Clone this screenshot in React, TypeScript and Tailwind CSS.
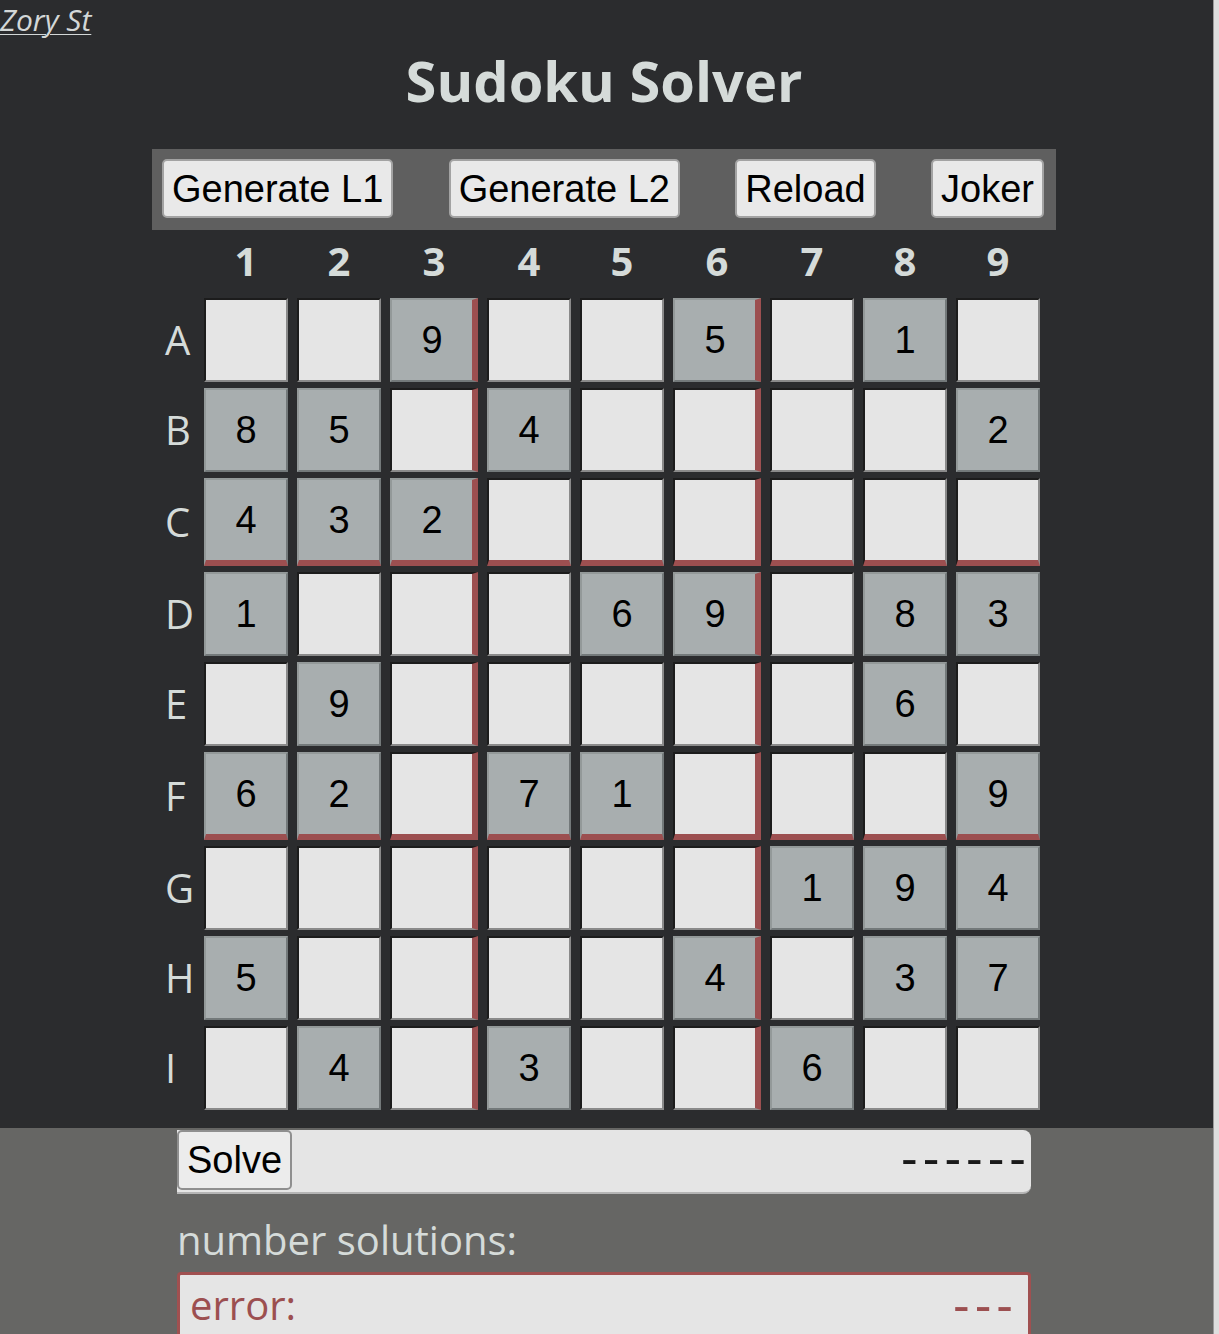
import React from "react";

const rows = ["A", "B", "C", "D", "E", "F", "G", "H", "I"];
const puzzle = [
  "009005010",
  "850400002",
  "432000000",
  "100069083",
  "090000060",
  "620710009",
  "000000194",
  "500004037",
  "040300600",
];

const Cell = ({ value, r, c }: { value: string; r: number; c: number }) => {
  const given = value !== "0";
  const redRight = c === 2 || c === 5;
  const redBottom = r === 2 || r === 5;
  // top/left edges follow the cell state, right/bottom turn red on box lines
  const face = given
    ? "bg-[#a8aeaf] border-t-[#939999] border-l-[#939999]"
    : "bg-[#e5e5e5] border-t-[#1c1c1c] border-l-[#1c1c1c]";
  const right = redRight
    ? "w-[88px] border-r-[6px] border-r-[#9c4f50]"
    : given
      ? "w-[84px] border-r-2 border-r-[#73797a]"
      : "w-[84px] border-r-2 border-r-[#8a8a8a]";
  const bottom = redBottom
    ? "h-[88px] border-b-[6px] border-b-[#9c4f50]"
    : given
      ? "h-[84px] border-b-2 border-b-[#73797a]"
      : "h-[84px] border-b-2 border-b-[#8a8a8a]";
  return (
    <div
      className={`flex items-center justify-center border-t-2 border-l-2 text-[38px] text-black ${face} ${right} ${bottom}`}
      style={{ fontFamily: "'Liberation Sans', Arial, sans-serif" }}
    >
      {given ? value : ""}
    </div>
  );
};

export default function App() {
  return (
    <div className="flex h-[1334px] overflow-hidden bg-[#2b2c2e]">
      <div className="flex flex-1 flex-col">
        <div className="h-[40px]">
          <a
            href="#"
            className="text-[30px] italic leading-[40px] text-[#d3d7d7] underline decoration-1 underline-offset-[3px]"
            style={{ fontFamily: "'Open Sans', sans-serif" }}
          >
            Zory St
          </a>
        </div>

        <div className="pr-[5px]">
          <h1
            className="text-center text-[56px] font-bold leading-[80px] text-[#d5dbd9]"
            style={{ fontFamily: "'Open Sans', sans-serif" }}
          >
            Sudoku Solver
          </h1>

          <div className="mx-auto mt-[29px] w-[904px]">
            <div
              className="flex items-center justify-between bg-[#5f5f5f] pl-[10px] pr-[12px] pt-[10px] pb-[12px]"
              style={{ fontFamily: "'Liberation Sans', Arial, sans-serif" }}
            >
              {["Generate L1", "Generate L2", "Reload", "Joker"].map((label) => (
                <button
                  key={label}
                  className="h-[59px] rounded-[5px] border-2 border-[#a3a3a3] bg-[#e9e9e9] px-[8px] text-[38px] leading-none text-black"
                >
                  {label}
                </button>
              ))}
            </div>

            <div
              className="ml-[13px] grid grid-cols-[30px_84px_84px_88px_84px_84px_88px_84px_84px_84px] items-center gap-x-[9px] gap-y-[6px]"
              style={{ fontFamily: "'Open Sans', sans-serif" }}
            >
              <div className="h-[62px]" />
              {Array.from({ length: 9 }, (_, i) => (
                <div
                  key={i}
                  className="flex h-[62px] items-center justify-center text-[40px] font-bold text-[#d5dbd9]"
                >
                  {i + 1}
                </div>
              ))}
              {rows.map((label, r) => (
                <React.Fragment key={label}>
                  <div className="text-[40px] leading-none text-[#d5dbd9]">{label}</div>
                  {puzzle[r].split("").map((v, c) => (
                    <Cell key={c} value={v} r={r} c={c} />
                  ))}
                </React.Fragment>
              ))}
            </div>
          </div>
        </div>

        <div className="mt-[18px] flex-1 bg-[#666664] pr-[5px]">
          <div className="mx-auto w-[854px]">
            <div
              className="mt-[2px] flex h-[64px] items-center justify-between rounded-r-[8px] border-b-2 border-[#b5b5b5] bg-[#e5e5e5]"
              style={{ fontFamily: "'Liberation Sans', Arial, sans-serif" }}
            >
              <button className="h-[60px] self-start rounded-[5px] border-2 border-[#8f8f8f] bg-[#ececec] px-[8px] text-[38px] leading-none text-black">
                Solve
              </button>
              <span className="mb-[6px] text-[50px] leading-none tracking-[5px] text-[#1a1a1a]">
                ------
              </span>
            </div>

            <div
              className="mt-[20px] text-[40px] leading-[52px] text-[#d5dbd9]"
              style={{ fontFamily: "'Open Sans', sans-serif" }}
            >
              number solutions:
            </div>

            <div className="mt-[6px] flex h-[120px] items-start justify-between rounded-t-[4px] border-[3px] border-[#a05050] bg-[#e5e5e5] pl-[10px] pr-[10px] pt-[10px] text-[#9c4f50]">
              <span
                className="text-[40px] leading-[40px]"
                style={{ fontFamily: "'Open Sans', sans-serif" }}
              >
                error:
              </span>
              <span
                className="text-[50px] leading-[40px] tracking-[5px]"
                style={{ fontFamily: "'Liberation Sans', Arial, sans-serif" }}
              >
                ---
              </span>
            </div>
          </div>
        </div>
      </div>
      <div className="w-[6px] border-l border-[#9a9a9a] bg-[#dedede]" />
    </div>
  );
}
